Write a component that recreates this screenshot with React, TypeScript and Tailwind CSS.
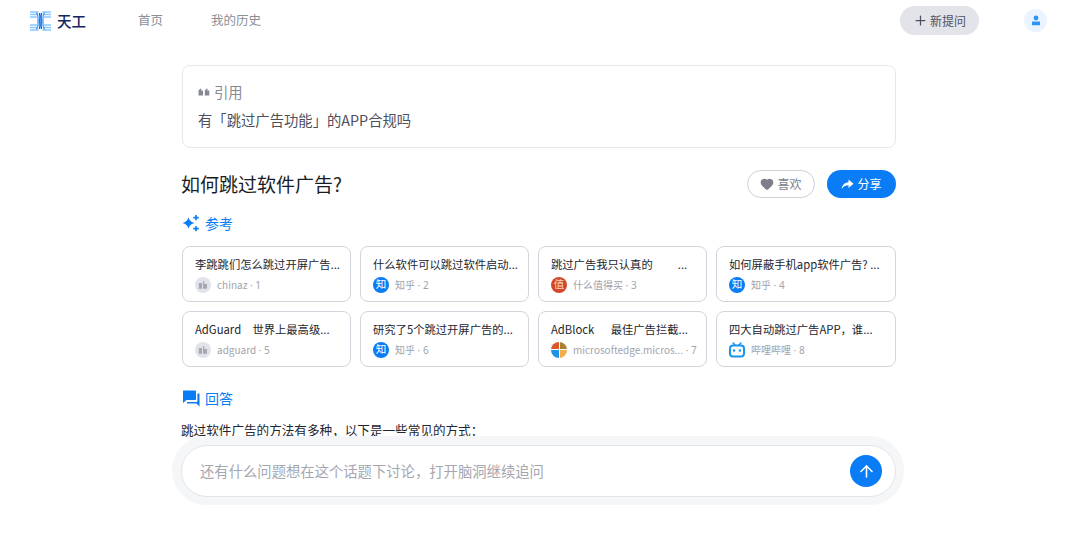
import { ArrowUp, Heart, Plus } from "lucide-react";

const font = "font-['Noto_Sans_CJK_SC','Noto_Sans',sans-serif]";

function Logo() {
  return (
    <svg width="21" height="20" viewBox="0 0 21 20" fill="none">
      <g stroke="#8cc7ff" strokeWidth="1.3">
        <path d="M0 1H8.5M12.5 1H21M0 3.5H7.5M13.5 3.5H21M0 6H7M14 6H21M0 14H7M14 14H21M0 16.5H7.5M13.5 16.5H21M0 19H8.5M12.5 19H21" />
      </g>
      <g stroke="#3a9bff" strokeWidth="1.3">
        <path d="M6.5 1.5C9 5 8 8 8 10C8 12 9 15 6.5 18.5" />
        <path d="M14.5 1.5C12 5 13 8 13 10C13 12 12 15 14.5 18.5" />
      </g>
      <g stroke="#0b62dd" strokeWidth="1.3">
        <path d="M9.4 2C10.6 6 9.7 8 9.7 10C9.7 12 10.6 14 9.4 18" />
        <path d="M11.6 2C10.4 6 11.3 8 11.3 10C11.3 12 10.4 14 11.6 18" />
      </g>
    </svg>
  );
}

function Sparkle() {
  return (
    <svg width="18" height="18" viewBox="0 0 18 18" fill="#0a7cf5">
      <path d="M6.5 3C7 6 8.4 7.6 12.5 9C8.4 10.4 7 12 6.5 15C6 12 4.6 10.4 0.5 9C4.6 7.6 6 6 6.5 3Z" />
      <path d="M13.2 1h1.6v1.8h1.9v1.6h-1.9v1.9h-1.6V4.4h-1.9V2.8h1.9Z" />
      <path d="M13.2 12h1.6v1.8h1.9v1.6h-1.9v1.9h-1.6v-1.9h-1.9v-1.6h1.9Z" />
    </svg>
  );
}

function Chat() {
  return (
    <svg width="18" height="17" viewBox="0 0 18 17" fill="#0a7cf5">
      <path d="M2 0.5H13C13.8 0.5 14 1 14 1.5V9C14 9.8 13.6 10 13 10H4.5L1 13V1.5C1 1 1.2 0.5 2 0.5Z" />
      <path d="M15.4 3.5H16.5C17.2 3.5 17.5 3.9 17.5 4.5V16.5L14.4 13.5H5V12H14C15 12 15.4 11.6 15.4 10.8Z" />
    </svg>
  );
}

function Site({ kind }: { kind: string }) {
  if (kind === "zhihu")
    return (
      <span className="flex h-4 w-4 shrink-0 items-center justify-center rounded-full bg-[#0a7cf5] text-[10.5px] leading-none text-white">
        知
      </span>
    );
  if (kind === "smzdm")
    return (
      <span className="flex h-4 w-4 shrink-0 items-center justify-center rounded-full bg-[#d2492a] text-[10.5px] leading-none text-[#f6d3c4]">
        值
      </span>
    );
  if (kind === "edge")
    return (
      <span className="grid h-4 w-4 shrink-0 grid-cols-2 grid-rows-2 gap-px overflow-hidden rounded-full">
        <span className="bg-[#d9572b]" />
        <span className="bg-[#a9822f]" />
        <span className="bg-[#1e94e8]" />
        <span className="bg-[#f7ad45]" />
      </span>
    );
  if (kind === "bili")
    return (
      <svg className="shrink-0" width="16" height="16" viewBox="0 0 16 16" fill="none">
        <path d="M4.2 1L6 3M11.8 1L10 3" stroke="#1b96ee" strokeWidth="1.6" strokeLinecap="round" />
        <rect x="1" y="3.4" width="14" height="11" rx="3" stroke="#1b96ee" strokeWidth="2" />
        <rect x="4" y="7.2" width="2.2" height="2.6" rx="0.8" fill="#1b96ee" />
        <rect x="9.8" y="7.2" width="2.2" height="2.6" rx="0.8" fill="#1b96ee" />
      </svg>
    );
  return (
    <span className="flex h-4 w-4 shrink-0 items-center justify-center rounded-full bg-[#e1e3ea]">
      <svg width="10" height="10" viewBox="0 0 10 10" fill="#a5a7b1">
        <path d="M0.8 3H4V8.8H0.8ZM5 1H6.2V4H9V8.8H5Z" />
      </svg>
    </span>
  );
}

const cards = [
  { t: "李跳跳们怎么跳过开屏广告...", k: "grey", s: "chinaz", n: 1 },
  { t: "什么软件可以跳过软件启动...", k: "zhihu", s: "知乎", n: 2 },
  { t: "跳过广告我只认真的　　 ...", k: "smzdm", s: "什么值得买", n: 3 },
  { t: "如何屏蔽手机app软件广告? ...", k: "zhihu", s: "知乎", n: 4 },
  { t: "AdGuard　世界上最高级...", k: "grey", s: "adguard", n: 5 },
  { t: "研究了5个跳过开屏广告的...", k: "zhihu", s: "知乎", n: 6 },
  { t: "AdBlock　  最佳广告拦截...", k: "edge", s: "microsoftedge.micros...", n: 7 },
  { t: "四大自动跳过广告APP，谁...", k: "bili", s: "哔哩哔哩", n: 8 },
];

export default function App() {
  return (
    <div className={`relative h-[553px] w-[1078px] overflow-hidden bg-white ${font}`}>
      <header className="flex h-[41px] items-center pl-[30px] pr-[31px]">
        <Logo />
        <span className="ml-[6px] w-[31px] text-[14.5px] font-medium text-[#15255e]">天工</span>
        <nav className="ml-[50px] flex gap-[48px] text-[12.5px] text-[#8b8e99]">
          <span>首页</span>
          <span>我的历史</span>
        </nav>
        <button className="ml-auto flex h-[29px] w-[79px] items-center justify-center gap-[2px] rounded-full bg-[#e2e4ea] text-[12px] text-[#4e5161]">
          <Plus size={15} strokeWidth={2} />
          新提问
        </button>
        <span className="ml-[45px] flex h-[23px] w-[23px] items-center justify-center rounded-full bg-[#eaf4ff]">
          <svg width="10" height="11" viewBox="0 0 10 11" fill="#2f93fa">
            <circle cx="5" cy="3" r="2.4" />
            <rect x="1" y="6.4" width="8" height="3.8" rx="0.5" />
          </svg>
        </span>
      </header>

      <main className="ml-[182px] mt-[24px] w-[714px]">
        <section className="h-[83px] rounded-[8px] border border-[#e7e8ec] pl-[15px] pt-[15px]">
          <div className="flex h-[22px] items-center gap-[4px] text-[14.33px] text-[#868994]">
            <svg width="12" height="8" viewBox="0 0 12 8" fill="#868994">
              <path d="M0.5 3.5C0.5 2 1.5 1 3 0.5L3.5 1.2C3 1.6 2.8 2 2.8 2.5H5V7.5H0.5Z" />
              <path d="M6.8 3.5C6.8 2 7.8 1 9.3 0.5L9.8 1.2C9.3 1.6 9.1 2 9.1 2.5H11.3V7.5H6.8Z" />
            </svg>
            引用
          </div>
          <p className="mt-[6px] text-[14.33px] leading-[22px] text-[#4d505c]">有「跳过广告功能」的APP合规吗</p>
        </section>

        <div className="mt-[22px] flex h-[28px] items-center">
          <h1 className="-ml-[1px] text-[19px] font-normal text-[#1a1c25]">如何跳过软件广告?</h1>
          <button className="ml-auto flex h-[28px] w-[68px] items-center justify-center gap-[3px] rounded-full border border-[#cfd1d8] text-[12px] text-[#7c7f8b]">
            <Heart size={14} fill="#7c7f8b" stroke="#7c7f8b" />
            喜欢
          </button>
          <button className="ml-[12px] flex h-[28px] w-[69px] items-center justify-center gap-[3px] rounded-full bg-[#0a7cf5] text-[12px] text-white">
            <svg width="13" height="11" viewBox="0 0 13 11" fill="white">
              <path d="M7.5 0.5L12.5 4.8L7.5 9V6.2C4.5 6.2 2.5 7.2 0.7 10C1.2 6 3.4 3.5 7.5 3.2Z" />
            </svg>
            分享
          </button>
        </div>

        <div className="mt-[16px] flex h-[18px] items-center gap-[6px] text-[14px] text-[#0a7cf5]">
          <Sparkle />
          <span className="-ml-[1px]">参考</span>
        </div>

        <div className="mt-[14px] grid grid-cols-[169px_169px_169px_1fr] gap-[9px]">
          {cards.map((c) => (
            <article key={c.n} className="h-[56px] min-w-0 rounded-[8px] border border-[#d3d5dc] pl-[12px] pr-[6px] pt-[8px]">
              <div className="overflow-hidden whitespace-pre text-[11.3px] leading-[19px] text-[#23252f]">{c.t}</div>
              <div className="mt-[2px] flex h-[17px] items-center gap-[6px] text-[10px] text-[#a1a3ad]">
                <Site kind={c.k} />
                <span className="whitespace-nowrap">
                  {c.s}
                  <span className="font-['Noto_Sans',sans-serif]"> · {c.n}</span>
                </span>
              </div>
            </article>
          ))}
        </div>

        <div className="mt-[22px] flex h-[18px] items-center gap-[5px] text-[14px] text-[#0a7cf5]">
          <Chat />
          回答
        </div>
        <p className="-ml-[1px] mt-[13px] text-[12.6px] leading-[20px] text-[#23252f]">跳过软件广告的方法有多种，以下是一些常见的方式：</p>
      </main>

      <div className="absolute left-[172px] top-[436px] h-[69px] w-[732px] rounded-[34px] bg-[#f5f6f8] p-[9px]">
        <div className="flex h-[52px] w-[715px] items-center rounded-[26px] border border-[#e4e5ea] bg-white pl-[18px] pr-[13px]">
          <span className="text-[14.33px] text-[#a5a7b0]">还有什么问题想在这个话题下讨论，打开脑洞继续追问</span>
          <span className="ml-auto flex h-[32px] w-[32px] items-center justify-center rounded-full bg-[#0a7cf5]">
            <ArrowUp size={19} color="white" strokeWidth={2} />
          </span>
        </div>
      </div>
    </div>
  );
}
